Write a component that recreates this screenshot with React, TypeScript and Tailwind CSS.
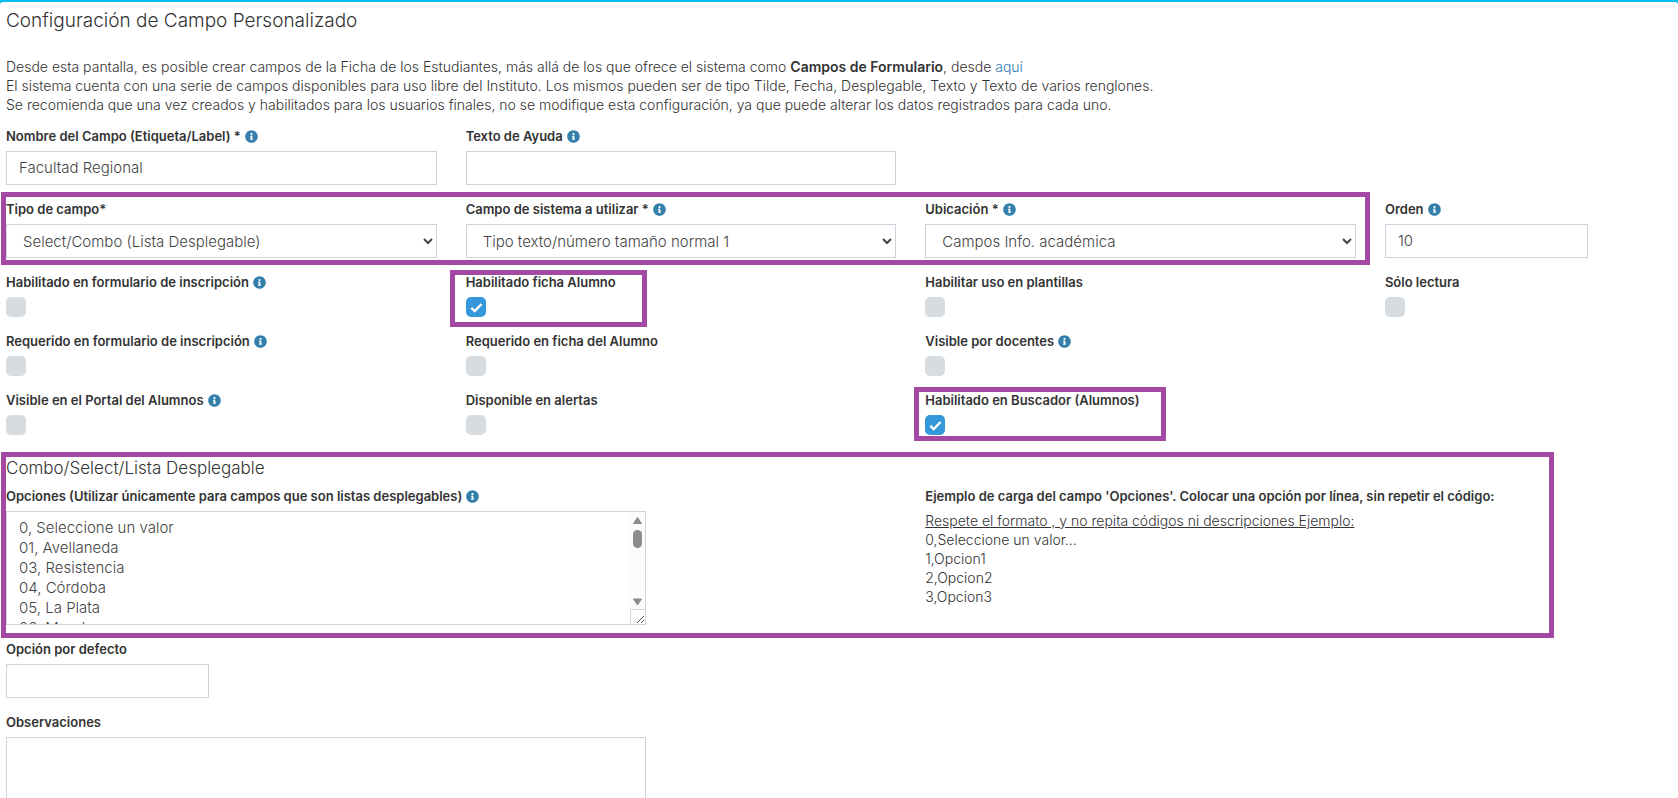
import { useId, useState, type ReactNode } from "react";
import { FaInfoCircle } from "react-icons/fa";

const LABEL = "mb-[5px] flex h-[18px] items-start gap-1 text-[13px] leading-[17px] font-semibold text-[#333]";
const CONTROL = "block h-[34px] border border-[#cfd3de] bg-white text-[15px] font-light text-[#444]";
const ROW = "grid grid-cols-[3fr_3fr_3fr_2fr] gap-x-[29px]";

function Highlight({ className }: { className: string }) {
  return <div aria-hidden="true" className={`pointer-events-none absolute border-[5px] border-[#a349a4] ${className}`} />;
}

function FieldLabel({ id, text, info }: { id: string; text: string; info?: boolean }) {
  return (
    <label htmlFor={id} className={LABEL}>
      {text}
      {info && <FaInfoCircle className="mt-[2px] size-[13px] shrink-0 text-[#3480ab]" />}
    </label>
  );
}

function TextField({ label, info, value = "", className = "w-full" }: { label: string; info?: boolean; value?: string; className?: string }) {
  const id = useId();
  return (
    <div>
      <FieldLabel id={id} text={label} info={info} />
      <input id={id} type="text" defaultValue={value} className={`${CONTROL} px-3 pb-[2px] ${className}`} />
    </div>
  );
}

function SelectField({ label, info, value }: { label: string; info?: boolean; value: string }) {
  const id = useId();
  return (
    <div>
      <FieldLabel id={id} text={label} info={info} />
      <select id={id} className={`${CONTROL} w-full pl-3`}>
        <option>{value}</option>
      </select>
    </div>
  );
}

function CheckField({ label, info, initial = false, children }: { label: string; info?: boolean; initial?: boolean; children?: ReactNode }) {
  const id = useId();
  const [on, setOn] = useState(initial);
  return (
    <div className="relative">
      <FieldLabel id={id} text={label} info={info} />
      <div className="grid size-5">
        <input
          id={id}
          type="checkbox"
          checked={on}
          onChange={(e) => setOn(e.target.checked)}
          className="col-start-1 row-start-1 size-5 appearance-none rounded-[5px] bg-[#d6dcdf] checked:bg-[#3498db]"
        />
        {on && (
          <svg viewBox="0 0 20 20" className="pointer-events-none col-start-1 row-start-1 size-5" fill="none" stroke="#fff" strokeWidth="2.4">
            <path d="M5.3 10.8 L8.7 14 L15.6 7" />
          </svg>
        )}
      </div>
      {children}
    </div>
  );
}

const OPTIONS = ["0, Seleccione un valor", "01, Avellaneda", "03, Resistencia", "04, Córdoba", "05, La Plata", "06, Mendoza"].join("\n");

function OptionsField() {
  const id = useId();
  return (
    <div className="col-span-2">
      <FieldLabel id={id} text="Opciones (Utilizar únicamente para campos que son listas desplegables)" info />
      <div className="flex h-[114px] w-full max-w-[640px] border border-[#cfd3de]">
        <textarea
          id={id}
          defaultValue={OPTIONS}
          className="block h-full min-w-0 flex-1 resize-none bg-white px-3 pt-[6px] text-[15px] leading-5 font-light text-[#444] outline-none [scrollbar-width:none]"
        />
        <svg viewBox="0 0 15 112" className="h-[112px] w-[15px] shrink-0" aria-hidden="true">
          <rect width="15" height="112" fill="#fcfcfc" />
          <path d="M7.500 5.500 L11.500 11.500 H3.500 Z" fill="#8b8b8b" stroke="#8b8b8b" strokeLinejoin="round" />
          <rect x="3" y="18" width="9" height="18" rx="4.5" fill="#8b8b8b" />
          <path d="M7.500 93 L11.500 87 H3.500 Z" fill="#8b8b8b" stroke="#8b8b8b" strokeLinejoin="round" />
          <path d="M0.500 112 V97.500 H15" fill="#fff" stroke="#d4d6dd" />
          <path d="M7 111 L14 104 M11 111 L14 108" stroke="#555" />
        </svg>
      </div>
    </div>
  );
}

export default function App() {
  const notesId = useId();
  return (
    <div className="bg-[#00bff0] pt-[2px] font-['Inter',sans-serif] text-[#333]">
      <main className="overflow-hidden rounded-t-[3px] bg-white px-[6px]">
        <h1 className="mt-1 text-[19px] leading-[30px] font-light">Configuración de Campo Personalizado</h1>
        <p className="mt-[21px] mb-[14px] text-sm leading-[19px] font-light">
          Desde esta pantalla, es posible crear campos de la Ficha de los Estudiantes, más allá de los que ofrece el sistema como{" "}
          <strong className="font-semibold">Campos de Formulario</strong>, desde{" "}
          <a href="#formulario" className="text-[#337ab7]">aquí</a>
          <br />
          El sistema cuenta con una serie de campos disponibles para uso libre del Instituto. Los mismos pueden ser de tipo Tilde, Fecha,
          Desplegable, Texto y Texto de varios renglones.
          <br />
          Se recomienda que una vez creados y habilitados para los usuarios finales, no se modifique esta configuración, ya que puede
          alterar los datos registrados para cada uno.
        </p>

        <form className="flex flex-col gap-4">
          <div className={ROW}>
            <TextField label="Nombre del Campo (Etiqueta/Label) *" info value="Facultad Regional" />
            <TextField label="Texto de Ayuda" info />
          </div>

          <div className={ROW}>
            <div className="relative col-span-3 grid grid-cols-3 gap-x-[29px]">
              <SelectField label="Tipo de campo*" value="Select/Combo (Lista Desplegable)" />
              <SelectField label="Campo de sistema a utilizar *" info value="Tipo texto/número tamaño normal 1" />
              <SelectField label="Ubicación *" info value="Campos Info. académica" />
              <Highlight className="-top-[9px] -right-[14px] -bottom-[7px] -left-[5px]" />
            </div>
            <TextField label="Orden" info value="10" className="w-full max-w-[203px]" />
          </div>

          <div className={ROW}>
            <CheckField label="Habilitado en formulario de inscripción" info />
            <CheckField label="Habilitado ficha Alumno" initial>
              <Highlight className="-top-1 -bottom-[10px] -left-4 w-[197px]" />
            </CheckField>
            <CheckField label="Habilitar uso en plantillas" />
            <CheckField label="Sólo lectura" />
          </div>

          <div className={ROW}>
            <CheckField label="Requerido en formulario de inscripción" info />
            <CheckField label="Requerido en ficha del Alumno" />
            <CheckField label="Visible por docentes" info />
          </div>

          <div className={ROW}>
            <CheckField label="Visible en el Portal del Alumnos" info />
            <CheckField label="Disponible en alertas" />
            <CheckField label="Habilitado en Buscador (Alumnos)" initial>
              <Highlight className="-top-[5px] -bottom-[6px] -left-[11px] w-[252px]" />
            </CheckField>
          </div>

          <section className="relative">
            <h2 className="mb-[2px] text-[17px] leading-[35px] font-light">Combo/Select/Lista Desplegable</h2>
            <div className={ROW}>
              <OptionsField />
              <div className="col-span-2 text-sm leading-[19px] font-light">
                <p className={LABEL}>Ejemplo de carga del campo 'Opciones'. Colocar una opción por línea, sin repetir el código:</p>
                <p className="underline">Respete el formato , y no repita códigos ni descripciones Ejemplo:</p>
                <p>0,Seleccione un valor...</p>
                <p>1,Opcion1</p>
                <p>2,Opcion2</p>
                <p>3,Opcion3</p>
              </div>
            </div>
            <Highlight className="top-[1px] right-[118px] -bottom-[13px] -left-[5px]" />
          </section>

          <TextField label="Opción por defecto" className="w-full max-w-[203px]" />

          <div>
            <FieldLabel id={notesId} text="Observaciones" />
            <textarea id={notesId} className="block h-[114px] w-full max-w-[640px] border border-[#cfd3de] bg-white px-3 py-[6px] text-[15px] leading-5 font-light text-[#444]" />
          </div>
        </form>
      </main>
    </div>
  );
}
